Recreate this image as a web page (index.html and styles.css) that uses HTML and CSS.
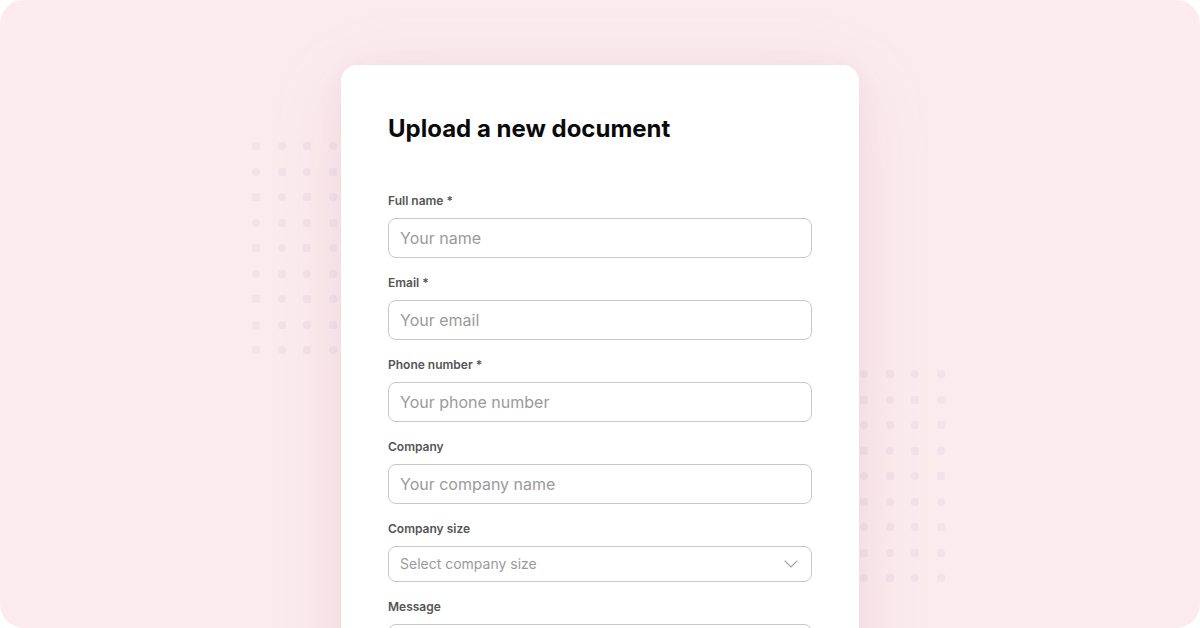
FILE: index.html
```html
<!DOCTYPE html>
<html lang="en">
<head>
<meta charset="utf-8">
<title>Upload a new document</title>
<link rel="stylesheet" href="styles.css">
</head>
<body>
<div class="canvas">
  <div class="dots dots-left">
    <span></span><span></span><span></span><span></span><span></span>
    <span></span><span></span><span></span><span></span><span></span>
    <span></span><span></span><span></span><span></span><span></span>
    <span></span><span></span><span></span><span></span><span></span>
    <span></span><span></span><span></span><span></span><span></span>
    <span></span><span></span><span></span><span></span><span></span>
    <span></span><span></span><span></span><span></span><span></span>
    <span></span><span></span><span></span><span></span><span></span>
    <span></span><span></span><span></span><span></span><span></span>
  </div>
  <div class="dots dots-right">
    <span></span><span></span><span></span><span></span><span></span>
    <span></span><span></span><span></span><span></span><span></span>
    <span></span><span></span><span></span><span></span><span></span>
    <span></span><span></span><span></span><span></span><span></span>
    <span></span><span></span><span></span><span></span><span></span>
    <span></span><span></span><span></span><span></span><span></span>
    <span></span><span></span><span></span><span></span><span></span>
    <span></span><span></span><span></span><span></span><span></span>
    <span></span><span></span><span></span><span></span><span></span>
  </div>
  <div class="card">
    <h1 class="title">Upload a new document</h1>
    <form class="form">
      <div class="field">
        <label class="label" for="name">Full name *</label>
        <input class="input" id="name" type="text" placeholder="Your name">
      </div>
      <div class="field">
        <label class="label" for="email">Email *</label>
        <input class="input" id="email" type="email" placeholder="Your email">
      </div>
      <div class="field">
        <label class="label" for="phone">Phone number *</label>
        <input class="input" id="phone" type="tel" placeholder="Your phone number">
      </div>
      <div class="field">
        <label class="label" for="company">Company</label>
        <input class="input" id="company" type="text" placeholder="Your company name">
      </div>
      <div class="field">
        <label class="label" for="size">Company size</label>
        <div class="select">
          <span class="select-text">Select company size</span>
          <svg class="chevron" width="14" height="8" viewBox="0 0 14 8" fill="none"><path d="M1 1l6 6 6-6" stroke="#a3a3a3" stroke-width="1.1" stroke-linecap="round" stroke-linejoin="round"/></svg>
        </div>
      </div>
      <div class="field">
        <label class="label" for="message">Message</label>
        <textarea class="textarea" id="message" placeholder="Your message"></textarea>
      </div>
    </form>
  </div>
</div>
</body>
</html>
```

FILE: styles.css
```css
* { box-sizing: border-box; }
html, body {
  margin: 0;
  padding: 0;
  background: #ffffff;
}
body {
  font-family: Inter, "Liberation Sans", sans-serif;
  width: 1200px;
  height: 628px;
  overflow: hidden;
}
.canvas {
  position: relative;
  width: 1200px;
  height: 628px;
  background: #fbebef;
  border-radius: 24px;
  overflow: hidden;
  display: flex;
  justify-content: center;
  padding-top: 65px;
}
.dots {
  position: absolute;
  display: grid;
  grid-template-columns: repeat(5, 8px);
  grid-auto-rows: 8px;
  column-gap: 17.5px;
  row-gap: 17.5px;
  z-index: 0;
}
.dots span {
  display: block;
  width: 8px;
  height: 8px;
  background: #f2e2e9;
  border-radius: 50%;
}
.dots span:nth-child(odd) {
  border-radius: 2px;
}
.dots-left {
  left: 252px;
  top: 142px;
}
.dots-right {
  left: 834.5px;
  top: 370px;
}
.card {
  position: relative;
  z-index: 1;
  width: 518px;
  height: 640px;
  background: #ffffff;
  border-radius: 16px;
  box-shadow: 0 4px 24px rgba(170, 110, 135, 0.06), 0 16px 80px rgba(170, 110, 135, 0.12);
  padding: 48px 47px 0 47px;
}
.title {
  margin: 0;
  font-size: 24px;
  line-height: 32px;
  font-weight: 700;
  color: #0a0a0a;
  letter-spacing: 0;
}
.form {
  margin-top: 48px;
  display: flex;
  flex-direction: column;
  gap: 17px;
}
.field {
  display: flex;
  flex-direction: column;
  gap: 9px;
}
.label {
  font-size: 12px;
  line-height: 16px;
  font-weight: 600;
  color: #555555;
}
.input {
  height: 40px;
  width: 100%;
  border: 1px solid #c8c8c8;
  border-radius: 8px;
  padding: 0 11px;
  font-family: inherit;
  font-size: 16px;
  color: #222;
  background: #fff;
  outline: none;
}
.input::placeholder,
.textarea::placeholder {
  color: #9a9a9a;
}
.select {
  height: 36px;
  border: 1px solid #c8c8c8;
  border-radius: 8px;
  padding: 0 13px 0 11px;
  display: flex;
  align-items: center;
  justify-content: space-between;
}
.select-text {
  font-size: 14px;
  line-height: 16px;
  color: #9a9a9a;
  margin-top: -1px;
}
.chevron {
  display: block;
}
.textarea {
  height: 100px;
  width: 100%;
  border: 1px solid #c8c8c8;
  border-radius: 8px;
  padding: 10px 11px;
  font-family: inherit;
  font-size: 16px;
  resize: none;
  outline: none;
}
```
